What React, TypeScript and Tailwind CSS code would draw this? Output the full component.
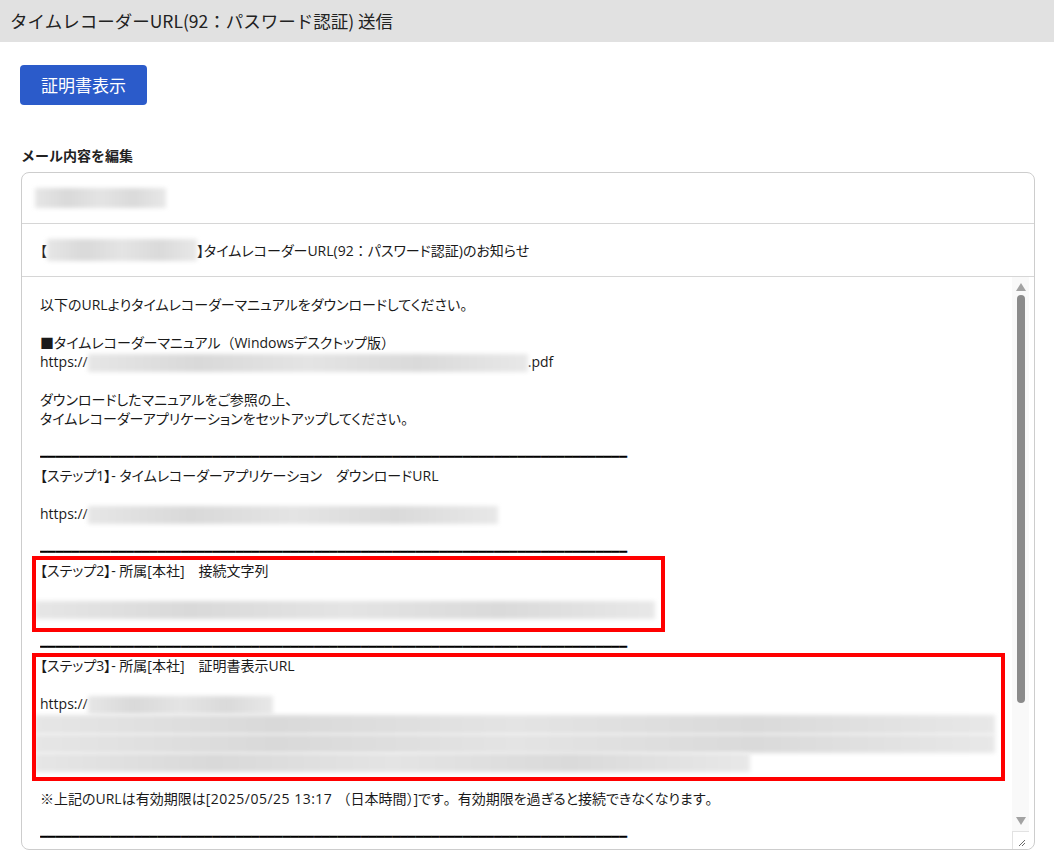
import React from 'react';

const FONT = "font-[family-name:'Noto_Sans_CJK_JP','Noto_Sans',sans-serif]";
const BODY_FONT = "font-[family-name:'Open_Sans','Noto_Sans_CJK_JP',sans-serif] [font-feature-settings:'palt']";
const RULE = '━'.repeat(75);

function Blur({ w, h = 18, className = '' }: { w: number; h?: number; className?: string }) {
  return (
    <span
      aria-hidden
      className={`inline-block align-middle bg-[linear-gradient(90deg,#e6e6e6,#d9d9d9_25%,#e4e4e4_50%,#dadada_75%,#e8e8e8)] blur-[2px] ${className}`}
      style={{ width: w, height: h }}
    />
  );
}

// full-width punctuation (no proportional spacing)
function Wide({ children }: { children: React.ReactNode }) {
  return <span className="[font-feature-settings:normal]">{children}</span>;
}

function Line({ children }: { children?: React.ReactNode }) {
  return <div className="h-[19px] whitespace-nowrap">{children ?? '\u00a0'}</div>;
}

function Rule() {
  return (
    <div className="h-[19px] overflow-hidden whitespace-nowrap font-[family-name:'DejaVu_Sans_Mono',monospace] text-[13px] leading-[19px] text-black">
      {RULE}
    </div>
  );
}

function Scrollbar() {
  return (
    <div className="flex w-[17px] flex-none flex-col bg-[#f9f9f9]">
      <div className="flex h-[18px] items-end justify-center pb-[4px]">
        <svg width="10" height="8" viewBox="0 0 10 8">
          <path d="M5 0 10 8H0z" fill="#a3a3a3" />
        </svg>
      </div>
      <div className="flex justify-center">
        <div className="h-[408px] w-[8px] rounded-full bg-[#8b8b8b]" />
      </div>
      <div className="flex-1" />
      <div className="flex h-[16px] items-start justify-center pt-[2px]">
        <svg width="10" height="8" viewBox="0 0 10 8">
          <path d="M0 0h10L5 8z" fill="#a3a3a3" />
        </svg>
      </div>
      <div className="relative h-[18px] border-l border-t border-[#e2e2e2] bg-white">
        <svg className="absolute bottom-[2px] right-[3px]" width="9" height="9" viewBox="0 0 9 9">
          <path d="M8 2 2 8M8 5 5 8" stroke="#6b6b6b" strokeWidth="1" />
        </svg>
      </div>
    </div>
  );
}

export default function App() {
  return (
    <div className={`min-h-screen bg-white text-[#1a1a1a] ${FONT}`}>
      {/* page title */}
      <div className="flex h-[42px] items-center bg-[#e1e1e1] px-[10px] text-[17.5px] text-[#222]">
        タイムレコーダーURL(92：パスワード認証) 送信
      </div>

      <div className="pl-[20px] pr-[19px]">
        <button className="mt-[23px] h-[40px] w-[127px] rounded-[4px] bg-[#2b5bca] text-[17px] text-white">
          証明書表示
        </button>

        <div className="mt-[41px] pl-px text-[14px] font-bold leading-[19px] text-[#222]">メール内容を編集</div>

        {/* mail editor */}
        <div className="mt-[7px] ml-px overflow-hidden rounded-[8px] border border-[#cdcdcd]">
          <div className="flex h-[51px] items-center border-b border-[#d6d6d6] px-[13px]">
            <Blur w={131} h={20} />
          </div>
          <div className={`flex h-[53px] items-center border-b border-[#d6d6d6] px-[18px] text-[14px] ${BODY_FONT}`}>
            <span>【</span>
            <Blur w={150} h={22} />
            <span>
              】タイムレコーダーURL(92<Wide>：</Wide>パスワード認証)のお知らせ
            </span>
          </div>

          <div className="flex h-[572px]">
            <div className={`relative flex-1 overflow-hidden pl-[18px] pt-[18px] text-[14px] leading-[19px] ${BODY_FONT}`}>
              <Line>以下のURLよりタイムレコーダーマニュアルをダウンロードしてください。</Line>
              <Line />
              <Line>
                ■タイムレコーダーマニュアル<Wide>（</Wide>Windowsデスクトップ版<Wide>）</Wide>
              </Line>
              <Line>
                https://
                <Blur w={440} />
                .pdf
              </Line>
              <Line />
              <Line>ダウンロードしたマニュアルをご参照の上、</Line>
              <Line>タイムレコーダーアプリケーションをセットアップしてください。</Line>
              <Line />
              <Rule />
              <Line>【ステップ1】- タイムレコーダーアプリケーション　ダウンロードURL</Line>
              <Line />
              <Line>
                https://
                <Blur w={410} />
              </Line>
              <Line />
              <Rule />
              <Line>【ステップ2】- 所属[本社]　接続文字列</Line>
              <Line />
              <Line>
                <Blur w={620} className="-ml-[5px]" />
              </Line>
              <Line />
              <Rule />
              <Line>【ステップ3】- 所属[本社]　証明書表示URL</Line>
              <Line />
              <Line>
                https://
                <Blur w={185} />
              </Line>
              <Line>
                <Blur w={960} h={19} className="-ml-[5px]" />
              </Line>
              <Line>
                <Blur w={960} h={19} className="-ml-[5px]" />
              </Line>
              <Line>
                <Blur w={715} h={19} className="-ml-[5px]" />
              </Line>
              <Line />
              <Line>
                ※上記のURLは有効期限は<span className="tracking-[0.5px]">[2025/05/25 13:17 </span>
                <Wide>（日本時間）</Wide>]です<Wide>。</Wide>有効期限を過ぎると接続できなくなります<Wide>。</Wide>
              </Line>
              <Line />
              <Rule />

              {/* annotation boxes */}
              <div className="absolute left-[10px] top-[279px] h-[76px] w-[633px] border-4 border-[#ff0000]" />
              <div className="absolute left-[10px] top-[376px] h-[128px] w-[973px] border-4 border-[#ff0000]" />
            </div>
            <Scrollbar />
            <div className="w-[5px] flex-none" />
          </div>
        </div>
      </div>
    </div>
  );
}
